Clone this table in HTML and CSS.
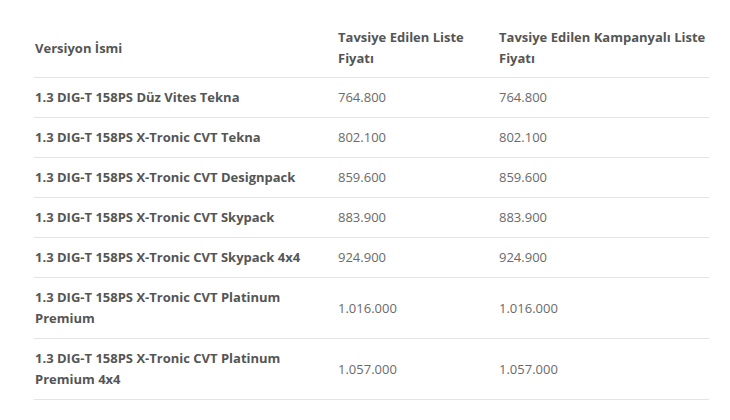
FILE: index.html
```html
<!DOCTYPE html>
<html lang="tr">
<head>
<meta charset="utf-8">
<title>Fiyat Listesi</title>
<link rel="stylesheet" href="styles.css">
</head>
<body>
<div class="page">
  <table class="price-table">
    <colgroup>
      <col class="c-name">
      <col class="c-list">
      <col class="c-camp">
    </colgroup>
    <thead>
      <tr>
        <th>Versiyon İsmi</th>
        <th>Tavsiye Edilen Liste Fiyatı</th>
        <th>Tavsiye Edilen Kampanyalı Liste Fiyatı</th>
      </tr>
    </thead>
    <tbody>
      <tr><td class="name">1.3 DIG-T 158PS Düz Vites Tekna</td><td>764.800</td><td>764.800</td></tr>
      <tr><td class="name">1.3 DIG-T 158PS X-Tronic CVT Tekna</td><td>802.100</td><td>802.100</td></tr>
      <tr><td class="name">1.3 DIG-T 158PS X-Tronic CVT Designpack</td><td>859.600</td><td>859.600</td></tr>
      <tr><td class="name">1.3 DIG-T 158PS X-Tronic CVT Skypack</td><td>883.900</td><td>883.900</td></tr>
      <tr><td class="name">1.3 DIG-T 158PS X-Tronic CVT Skypack 4x4</td><td>924.900</td><td>924.900</td></tr>
      <tr><td class="name">1.3 DIG-T 158PS X-Tronic CVT Platinum Premium</td><td>1.016.000</td><td>1.016.000</td></tr>
      <tr><td class="name">1.3 DIG-T 158PS X-Tronic CVT Platinum Premium 4x4</td><td>1.057.000</td><td>1.057.000</td></tr>
    </tbody>
  </table>
</div>
</body>
</html>
```
FILE: styles.css
```css
html, body {
  margin: 0;
  padding: 0;
  background: #ffffff;
}
.page {
  padding: 18px 0 0 34px;
  font-family: "Open Sans", "Liberation Sans", sans-serif;
  font-size: 13px;
  line-height: 21px;
  color: #5b5b5b;
}
.price-table {
  width: 675px;
  table-layout: fixed;
  border-collapse: collapse;
}
.c-name { width: 303px; }
.c-list { width: 161px; }
.c-camp { width: 211px; }
.price-table th {
  text-align: left;
  font-weight: 700;
  vertical-align: middle;
  padding: 9px 0 8px 1px;
  border-bottom: 1px solid #e4e4e4;
  color: #555;
}
.price-table th:nth-child(2) {
  padding-right: 20px;
}
.price-table td {
  vertical-align: middle;
  padding: 9px 0 9px 1px;
  border-bottom: 1px solid #e4e4e4;
  color: #6a6a6a;
}
.price-table td.name {
  font-weight: 700;
  color: #555;
}
```
